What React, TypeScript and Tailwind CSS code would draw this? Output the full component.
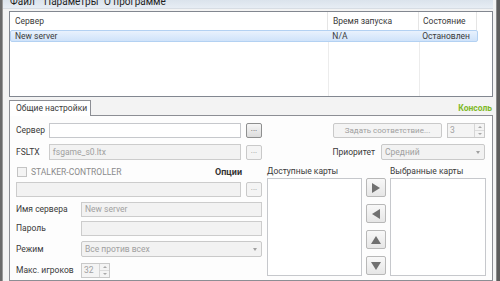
import React from "react";

const font = { fontFamily: "Roboto, 'Liberation Sans', Arial, sans-serif" };

function DotsBtn({ disabled = false }: { disabled?: boolean }) {
  return (
    <div
      className={
        "w-[16px] h-[15px] shrink-0 rounded-[2px] border flex items-center justify-center text-[8px] leading-none pb-[3px] " +
        (disabled
          ? "border-[#c9c9c9] bg-[#f4f4f4] text-[#9a9a9a]"
          : "border-[#8e8f8f] bg-gradient-to-b from-[#f6f6f6] to-[#dcdcdc] text-[#555]")
      }
    >
      ...
    </div>
  );
}

function Spin({ value, w }: { value: string; w: string }) {
  return (
    <div className={"h-[15px] border border-[#c9c9c9] bg-[#f4f4f4] flex items-center text-[#a0a0a0] " + w}>
      <span className="pl-[2px] flex-1">{value}</span>
      <div className="w-[10px] h-full border-l border-[#d6d6d6] flex flex-col">
        <div className="flex-1 flex items-center justify-center border-b border-[#dcdcdc]">
          <div className="w-0 h-0 border-l-[2px] border-r-[2px] border-b-[2px] border-l-transparent border-r-transparent border-b-[#a8a8a8]" />
        </div>
        <div className="flex-1 flex items-center justify-center">
          <div className="w-0 h-0 border-l-[2px] border-r-[2px] border-t-[2px] border-l-transparent border-r-transparent border-t-[#a8a8a8]" />
        </div>
      </div>
    </div>
  );
}

function Combo({ value, w }: { value: string; w: string }) {
  return (
    <div className={"h-[16px] border border-[#c9c9c9] rounded-[2px] bg-[#f2f2f2] flex items-center text-[#a0a0a0] " + w}>
      <span className="pl-[3px] flex-1 whitespace-nowrap">{value}</span>
      <div className="w-[12px] flex items-center justify-center">
        <div className="w-0 h-0 border-l-[2.5px] border-r-[2.5px] border-t-[3px] border-l-transparent border-r-transparent border-t-[#a0a0a0]" />
      </div>
    </div>
  );
}

function ArrowBtn({ dir }: { dir: "r" | "l" | "u" | "d" }) {
  const tri =
    dir === "r"
      ? "border-t-[5px] border-b-[5px] border-l-[8px] border-t-transparent border-b-transparent border-l-[#707070]"
      : dir === "l"
      ? "border-t-[5px] border-b-[5px] border-r-[8px] border-t-transparent border-b-transparent border-r-[#707070]"
      : dir === "u"
      ? "border-l-[5px] border-r-[5px] border-b-[8px] border-l-transparent border-r-transparent border-b-[#707070]"
      : "border-l-[5px] border-r-[5px] border-t-[8px] border-l-transparent border-r-transparent border-t-[#707070]";
  return (
    <div className="w-[20px] h-[19px] rounded-[2px] border border-[#b8b8b8] bg-gradient-to-b from-[#f8f8f8] to-[#e6e6e6] flex items-center justify-center">
      <div className={"w-0 h-0 " + tri} />
    </div>
  );
}

export default function App() {
  return (
    <div
      className="w-[500px] h-[281px] overflow-hidden flex bg-[#f3f3f3] text-[8.5px] leading-none text-[#3a3a3a] whitespace-nowrap"
      style={font}
    >
      {/* left window border */}
      <div className="w-[3px] h-full bg-[#6a6a6a] border-r border-[#9a9a9a] shrink-0" />
      <div className="w-[490px] shrink-0 flex flex-col">
        {/* menu */}
        <div className="h-[9px] bg-gradient-to-b from-[#dbe3ec] to-[#e7edf4] border-b border-[#d7dde4] flex items-start pl-[7px] text-[#1f1f1f] overflow-hidden">
          <span className="-mt-[4px] text-[10px] leading-[12px] w-[34px] shrink-0">Файл</span>
          <span className="-mt-[4px] text-[10px] leading-[12px] w-[60px] shrink-0">Параметры</span>
          <span className="-mt-[4px] text-[10px] leading-[12px] shrink-0">О программе</span>
        </div>
        {/* list view */}
        <div className="ml-[6px] mt-[2px] h-[86px] border border-[#828790] bg-white relative overflow-hidden">
          <div className="flex h-[18px] items-center">
            <div className="w-[318px] h-full flex items-center pl-[5px] border-r border-[#e5e5e5]">Сервер</div>
            <div className="w-[91px] h-full flex items-center pl-[5px] border-r border-[#e5e5e5]">Время запуска</div>
            <div className="w-[58px] h-full flex items-center pl-[4px] border-r border-[#e5e5e5]">Состояние</div>
          </div>
          <div className="flex h-[12px] items-center w-[468px] rounded-[2px] border border-[#b3d1f2] bg-gradient-to-b from-[#e9f2fd] to-[#cfe3fa]">
            <div className="w-[318px] pl-[4px]">New server</div>
            <div className="w-[91px] pl-[4px]">N/A</div>
            <div className="w-[58px] pl-[3px]">Остановлен</div>
          </div>
          <div className="absolute left-[318px] top-[30px] bottom-0 w-px bg-[#ececec]" />
          <div className="absolute left-[409px] top-[30px] bottom-0 w-px bg-[#ececec]" />
        </div>
        {/* tabs */}
        <div className="mt-[3px] ml-[6px] flex">
          <div className="w-[82px] h-[16px] border border-b-0 border-[#8c8e94] bg-white flex items-center pl-[6px] relative z-10 -mb-px pb-[1px]">
            Общие настройки
          </div>
          <div className="flex-1 flex justify-end items-center pr-[1px] text-[#7fb928] font-bold text-[8.5px] mt-[1px]">
            Консоль
          </div>
        </div>
        <div className="ml-[6px] flex-1 border border-[#8c8e94] bg-[#fdfdfd] flex gap-[5px] pl-[6px] pt-[7px]">
          {/* left column */}
          <div className="w-[246px] flex flex-col">
            <div className="flex items-center h-[15px]">
              <span className="w-[33px]">Сервер</span>
              <div className="w-[193px] h-[15px] border border-[#c6c8cc] bg-white mr-[5px]" />
              <DotsBtn />
            </div>
            <div className="flex items-center h-[16px] mt-[6px]">
              <span className="w-[33px]">FSLTX</span>
              <div className="w-[193px] h-[16px] border border-[#cccccc] bg-[#f2f2f2] mr-[5px] flex items-center pl-[3px] text-[#a0a0a0]">
                fsgame_s0.ltx
              </div>
              <DotsBtn disabled />
            </div>
            <div className="flex items-center h-[12px] mt-[6px]">
              <div className="w-[10px] h-[10px] border border-[#c4c4c4] bg-[#f4f4f4] ml-[1px] mr-[4px]" />
              <span className="text-[#8a8a8a] flex-1">STALKER-CONTROLLER</span>
              <span className="font-bold text-[#333] mr-[20px] text-[9px]">Опции</span>
            </div>
            <div className="flex items-center h-[15px] mt-[4px]">
              <div className="w-[226px] h-[15px] border border-[#cccccc] bg-[#f2f2f2] mr-[5px]" />
              <DotsBtn disabled />
            </div>
            <div className="flex items-center h-[15px] mt-[5px]">
              <span className="w-[65px]">Имя сервера</span>
              <div className="w-[181px] h-[15px] border border-[#cccccc] bg-[#f2f2f2] flex items-center pl-[3px] text-[#a0a0a0]">
                New server
              </div>
            </div>
            <div className="flex items-center h-[15px] mt-[4px]">
              <span className="w-[65px]">Пароль</span>
              <div className="w-[181px] h-[15px] border border-[#cccccc] bg-[#f2f2f2]" />
            </div>
            <div className="flex items-center h-[16px] mt-[5px]">
              <span className="w-[65px]">Режим</span>
              <Combo value="Все против всех" w="w-[181px]" />
            </div>
            <div className="flex items-center h-[14px] mt-[6px]">
              <span className="w-[65px]">Макс. игроков</span>
              <Spin value="32" w="w-[29px]" />
            </div>
          </div>
          {/* right column */}
          <div className="w-[219px] flex flex-col">
            <div className="flex items-center justify-end h-[15px] pr-[1px]">
              <div className="w-[109px] h-[15px] border border-[#c9c9c9] rounded-[2px] bg-[#f4f4f4] text-[#a0a0a0] flex items-center justify-center mr-[5px] text-[8px]">
                Задать соответствие...
              </div>
              <Spin value="3" w="w-[38px]" />
            </div>
            <div className="flex items-center justify-end h-[16px] mt-[6px] pr-[1px]">
              <span className="mr-[6px]">Приоритет</span>
              <Combo value="Средний" w="w-[104px]" />
            </div>
            <div className="flex h-[12px] items-center mt-[5px]">
              <span className="w-[123px]">Доступные карты</span>
              <span>Выбранные карты</span>
            </div>
            <div className="flex mt-[1px] h-[98px]">
              <div className="w-[95px] h-full border border-[#c6c8cc] bg-white" />
              <div className="w-[20px] mx-[4px] flex flex-col gap-[7px]">
                <ArrowBtn dir="r" />
                <ArrowBtn dir="l" />
                <ArrowBtn dir="u" />
                <ArrowBtn dir="d" />
              </div>
              <div className="w-[96px] h-full border border-[#c6c8cc] bg-white" />
            </div>
          </div>
        </div>
      </div>
      <div className="w-[3px] shrink-0" />
      {/* right window border */}
      <div className="w-[4px] h-full bg-[#5c5c5c] border-l border-[#8a8a8a] shrink-0" />
    </div>
  );
}
